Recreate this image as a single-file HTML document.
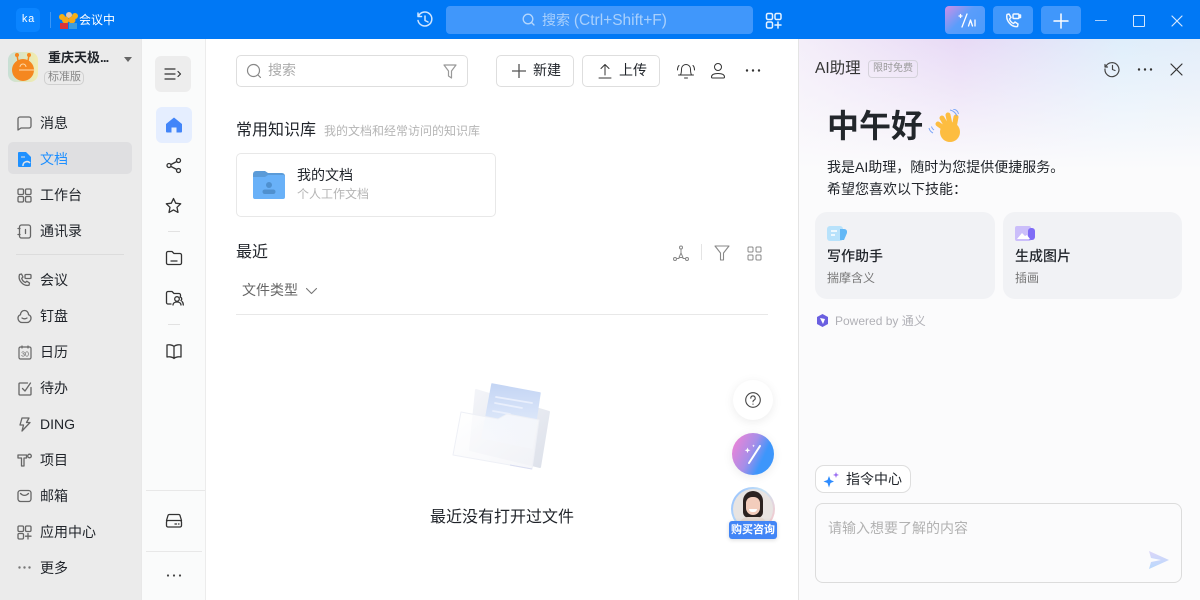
<!DOCTYPE html>
<html lang="zh-CN"><head><meta charset="utf-8"><title>钉钉文档</title>
<style>
*{box-sizing:border-box}
html,body{margin:0;padding:0;width:1200px;height:600px;overflow:hidden;background:#fff}
body{font-family:"Liberation Sans","Noto Sans CJK SC",sans-serif;color:#1f2329;position:relative}
.a,.t,svg.i{position:absolute}
.t{white-space:nowrap;line-height:20px}
svg.i{fill:none;stroke:#666;stroke-width:1.3;stroke-linecap:round;stroke-linejoin:round}
.nav{left:40px;font-size:14px;color:#1f2329}
.b{position:absolute;border:1px solid #dedede;border-radius:5px;background:#fff}
</style></head><body>
<!-- title bar -->
<div class="a" style="left:0;top:0;width:1200px;height:39px;background:#0078f5"></div>
<div class="a" style="left:16px;top:8px;width:24px;height:24px;background:#0a84ff;border-radius:5px"></div>
<div class="t" style="left:16px;top:10px;width:24px;text-align:center;color:#fff;font:11px/20px 'Liberation Mono',monospace">ka</div>
<div class="a" style="left:50px;top:12px;width:1px;height:16px;background:#3a97f8"></div>
<svg class="a" style="left:59px;top:11px" width="19" height="18" viewBox="0 0 19 18"><circle cx="10" cy="4" r="3" fill="#e0c5b0"/><circle cx="3" cy="6" r="3" fill="#f5b014"/><circle cx="16" cy="5" r="3" fill="#f5b014"/><circle cx="6.500" cy="9" r="3.500" fill="#f7a818"/><circle cx="13" cy="9" r="3.500" fill="#f7a818"/><rect x="1" y="12" width="8" height="6" fill="#d8323c"/><rect x="10" y="12" width="8" height="6" fill="#3c9ce0"/></svg>
<div class="t" style="left:79px;top:10px;font-size:12px;color:#fff">会议中</div>
<svg class="i" style="left:415px;top:10px;stroke:#cfe5ff;stroke-width:1.500" width="20" height="20" viewBox="0 0 20 20"><path d="M3.500 6A7 7 0 1 1 3 10.500M3 3v3.500h3.500M10 6v4.500l3 1.500"/></svg>
<div class="a" style="left:446px;top:6px;width:307px;height:28px;background:#4097fb;border-radius:4px"></div>
<svg class="i" style="left:521px;top:12px;stroke:#b5d7fd" width="15" height="15" viewBox="0 0 15 15"><circle cx="7" cy="7" r="4.800"/><path d="M10.500 10.500l2.500 2.500"/></svg>
<div class="t" style="left:542px;top:10px;font-size:14px;color:#a9d0fc">搜索 <span style="font-size:15.5px">(Ctrl+Shift+F)</span></div>
<svg class="i" style="left:765px;top:12px;stroke:#e6f2ff;stroke-width:1.500" width="18" height="18" viewBox="0 0 18 18"><rect x="1.500" y="1.500" width="6" height="6" rx="1.500"/><rect x="10" y="1.500" width="6" height="6" rx="1.500"/><rect x="1.500" y="10" width="6" height="6" rx="1.500"/><path d="M13 10v6M10 13h6"/></svg>
<div class="a" style="left:945px;top:6px;width:40px;height:28px;border-radius:4px;background:linear-gradient(135deg,#cf8fe6 0,#5a9dfb 45%,#4c9bfb 100%)"></div>
<svg class="i" style="left:957px;top:12px;stroke:#fff;stroke-width:1.300" width="20" height="18" viewBox="0 0 20 18"><path d="M10 2L5 15M2 4h3M3.500 2.500v3M11.500 14l2-6 2 6M18 8v6"/></svg>
<div class="a" style="left:993px;top:6px;width:40px;height:28px;border-radius:4px;background:#4097fb"></div>
<svg class="i" style="left:1004px;top:12px;stroke:#f0f7ff;stroke-width:1.500" width="18" height="18" viewBox="0 0 18 18"><path d="M3 2.500l2-.5 2 3.500-1.500 1.500c.5 2 2 3.500 4 4.500l1.500-1.500 3 2-.5 2.500c-6 1-12-6-10.500-12z"/><rect x="9" y="2" width="6" height="4.500" rx="1"/><path d="M15 3.500l1.500-.5v2.500L15 5"/></svg>
<div class="a" style="left:1041px;top:6px;width:40px;height:28px;border-radius:4px;background:#4097fb"></div>
<svg class="i" style="left:1053px;top:13px;stroke:#fff;stroke-width:1.500" width="16" height="16" viewBox="0 0 16 16"><path d="M8 1v14M1 8h14"/></svg>
<div class="a" style="left:1095px;top:20px;width:12px;height:1px;background:#a9d0fc"></div>
<div class="a" style="left:1133px;top:15px;width:12px;height:12px;border:1.300px solid #d5e8fe;border-radius:1px"></div>
<svg class="i" style="left:1171px;top:15px;stroke:#d5e8fe;stroke-width:1.200" width="12" height="12" viewBox="0 0 12 12"><path d="M1 1l10 10M11 1L1 11"/></svg>

<!-- left sidebar -->
<div class="a" style="left:0;top:39px;width:141px;height:561px;background:#ebebeb"></div>
<div class="a" style="left:8px;top:52px;width:30px;height:30px;border-radius:8px;background:linear-gradient(90deg,#c8dfd6,#f3ecae)"></div>
<svg class="a" style="left:8px;top:52px" width="30" height="30" viewBox="0 0 30 30"><circle cx="15" cy="18" r="11" fill="#f5871f"/><path d="M10 9L9 3M20 9l1-6" stroke="#f5871f" stroke-width="1.500"/><circle cx="9" cy="3" r="2" fill="#f5871f"/><circle cx="21" cy="3" r="2" fill="#f5871f"/><path d="M11 18h16M12 15a3 3 0 0 1 6 0" stroke="#ffd9a8" stroke-width="1" fill="none"/></svg>
<div class="t" style="left:48px;top:48px;font-size:13px;font-weight:700;color:#1f2329">重庆天极<span style="letter-spacing:-.8px">...</span></div>
<div class="a" style="left:124px;top:57px;border-left:4px solid transparent;border-right:4px solid transparent;border-top:5px solid #666"></div>
<div class="a" style="left:44px;top:71px;width:40px;height:14px;border:1px solid #d0d0d0;border-radius:5px"></div>
<div class="t" style="left:48px;top:67px;font-size:11px;color:#888">标准版</div>
<div class="a" style="left:8px;top:142px;width:124px;height:32px;border-radius:5px;background:#dfdfe1"></div>
<div class="a" style="left:16px;top:254px;width:108px;height:1px;background:#dcdcdc"></div>

<svg class="i" style="left:17px;top:116px" width="15" height="15" viewBox="0 0 15 15"><path d="M3 1h9a2 2 0 0 1 2 2v7a2 2 0 0 1-2 2H4l-3 2V3a2 2 0 0 1 2-2z"/></svg>
<div class="t nav" style="top:113px">消息</div>
<svg class="a" style="left:18px;top:152px" width="13" height="15" viewBox="0 0 13 15"><path d="M1 0h7l5 5v9a1 1 0 0 1-1 1H1a1 1 0 0 1-1-1V1a1 1 0 0 1 1-1z" fill="#1e90ff"/><path d="M5 14a4 4 0 0 1 7-3" stroke="#e4e4e6" stroke-width="1.500" fill="none"/><path d="M3 5h4" stroke="#e4e4e6"/></svg>
<div class="t nav" style="top:149px;color:#1e8fff">文档</div>
<svg class="i" style="left:17px;top:188px" width="15" height="15" viewBox="0 0 15 15"><rect x="1" y="1" width="5.500" height="5.500" rx="1.200"/><rect x="8.500" y="1" width="5.500" height="5.500" rx="1.200"/><rect x="1" y="8.500" width="5.500" height="5.500" rx="1.200"/><rect x="8.500" y="8.500" width="5.500" height="5.500" rx="1.200"/></svg>
<div class="t nav" style="top:185px">工作台</div>
<svg class="i" style="left:17px;top:224px" width="15" height="15" viewBox="0 0 15 15"><rect x="2.500" y="1" width="11" height="13" rx="2"/><path d="M1 4.500h2M1 10.500h2M8.500 5.500v4"/></svg>
<div class="t nav" style="top:221px">通讯录</div>
<svg class="i" style="left:17px;top:273px" width="15" height="15" viewBox="0 0 15 15"><path d="M2.500 1.500l2-.5 1.500 3-1.300 1.300c.5 2 1.900 3.400 3.800 4.200l1.300-1.300 2.700 1.800-.5 2.200C6.500 13.500.5 7.500 2.500 1.500z"/><rect x="8" y="1.500" width="6" height="4" rx="1"/></svg>
<div class="t nav" style="top:270px">会议</div>
<svg class="i" style="left:17px;top:309px" width="15" height="15" viewBox="0 0 15 15"><path d="M7.500 1.500c2.500 0 4 2 4 4.200 1.700.5 2.500 2 2.500 3.500 0 2.200-1.700 4.300-4 4.300H5c-2.300 0-4-2.100-4-4.300 0-1.500.8-3 2.500-3.500 0-2.200 1.500-4.200 4-4.200z"/><path d="M5 9c1.500 1 3.500 1 5 0"/></svg>
<div class="t nav" style="top:306px">钉盘</div>
<svg class="i" style="left:18px;top:345px;stroke-width:1.200" width="14" height="15" viewBox="0 0 14 15"><rect x="1" y="2" width="12" height="12" rx="1.500"/><path d="M4 1v2M10 1v2"/><text x="7" y="11.500" font-size="7" text-anchor="middle" fill="#666" stroke="none" font-family="Liberation Sans">30</text></svg>
<div class="t nav" style="top:342px">日历</div>
<svg class="i" style="left:18px;top:381px" width="14" height="15" viewBox="0 0 14 15"><path d="M13 6.500V13a1 1 0 0 1-1 1H2a1 1 0 0 1-1-1V3a1 1 0 0 1 1-1h7.500M4.500 7.500l2.500 2.500 5.500-8"/></svg>
<div class="t nav" style="top:378px">待办</div>
<svg class="i" style="left:18px;top:417px" width="13" height="15" viewBox="0 0 13 15"><path d="M4 1h7L8.500 5.500H12L4 14l1.500-6H2z"/></svg>
<div class="t nav" style="top:414px">DING</div>
<svg class="i" style="left:17px;top:453px" width="15" height="15" viewBox="0 0 15 15"><path d="M1 2h8.500v3H7v8H4.500V5H1z"/><circle cx="12.500" cy="3" r="1.800"/></svg>
<div class="t nav" style="top:450px">项目</div>
<svg class="i" style="left:17px;top:489px" width="15" height="14" viewBox="0 0 15 14"><rect x="1" y="1.500" width="13" height="11" rx="2.500"/><path d="M3.500 4.500c2.500 2.500 5.500 2.500 8 0"/></svg>
<div class="t nav" style="top:486px">邮箱</div>
<svg class="i" style="left:17px;top:525px" width="15" height="15" viewBox="0 0 15 15"><rect x="1" y="1" width="5.500" height="5.500" rx="1.200"/><rect x="8.500" y="1" width="5.500" height="5.500" rx="1.200"/><rect x="1" y="8.500" width="5.500" height="5.500" rx="1.200"/><path d="M11 8.500v5.500M8.500 11.200H14"/></svg>
<div class="t nav" style="top:522px">应用中心</div>
<svg class="a" style="left:18px;top:566px" width="13" height="3" viewBox="0 0 13 3"><circle cx="1.500" cy="1.500" r="1.200" fill="#777"/><circle cx="6.500" cy="1.500" r="1.200" fill="#777"/><circle cx="11.500" cy="1.500" r="1.200" fill="#777"/></svg>
<div class="t nav" style="top:558px">更多</div>

<!-- second column -->
<div class="a" style="left:141px;top:39px;width:65px;height:561px;background:#fafbfb;border-left:1px solid #e8e8e8;border-right:1px solid #ececec"></div>
<div class="a" style="left:155px;top:56px;width:36px;height:36px;background:#ededed;border-radius:6px"></div>
<svg class="i" style="left:164px;top:67px;stroke:#333;stroke-width:1.200" width="18" height="14" viewBox="0 0 18 14"><path d="M1 2h10M1 7h10M1 12h10M14 4.500l2.500 2.500-2.500 2.500"/></svg>
<div class="a" style="left:156px;top:107px;width:36px;height:36px;background:#e5eeff;border-radius:6px"></div>
<svg class="a" style="left:165px;top:116px" width="18" height="18" viewBox="0 0 18 18"><path d="M9 1.500L17 8v7.500a1 1 0 0 1-1 1h-4.500v-5h-5v5H2a1 1 0 0 1-1-1V8z" fill="#4285f9"/></svg>
<svg class="i" style="left:166px;top:157px;stroke:#333;stroke-width:1.300" width="16" height="17" viewBox="0 0 16 17"><circle cx="12.500" cy="3.500" r="2"/><circle cx="3" cy="8.500" r="2"/><circle cx="12.500" cy="13.500" r="2"/><path d="M5 7.500l5.800-3M5 9.500l5.800 3"/></svg>
<svg class="i" style="left:165px;top:197px;stroke:#333;stroke-width:1.300" width="17" height="17" viewBox="0 0 17 17"><path d="M8.500 1.500l2.200 4.700 5 .6-3.700 3.500 1 5.100-4.500-2.500-4.500 2.500 1-5.100L1.300 6.800l5-.6z"/></svg>
<div class="a" style="left:168px;top:231px;width:12px;height:1px;background:#e2e2e2"></div>
<svg class="i" style="left:165px;top:250px;stroke:#333;stroke-width:1.300" width="18" height="16" viewBox="0 0 18 16"><path d="M1.500 3a1.500 1.500 0 0 1 1.500-1.500h4l2 2h6a1.500 1.500 0 0 1 1.500 1.500v8a1.500 1.500 0 0 1-1.500 1.500H3A1.500 1.500 0 0 1 1.500 13zM6 11h6"/></svg>
<svg class="i" style="left:165px;top:290px;stroke:#333;stroke-width:1.300" width="19" height="16" viewBox="0 0 19 16"><path d="M6 14H3a1.500 1.500 0 0 1-1.500-1.500V3A1.500 1.500 0 0 1 3 1.500h4l2 2h5a1.500 1.500 0 0 1 1.500 1.500v1"/><circle cx="12" cy="9" r="2.300"/><path d="M8 15c0-4 8-4 8 0M15 7a2 2 0 0 1 1 3.500M17 11.500c1 .8 1.300 2 1.300 3.500"/></svg>
<div class="a" style="left:168px;top:324px;width:12px;height:1px;background:#e2e2e2"></div>
<svg class="i" style="left:166px;top:343px;stroke:#333;stroke-width:1.300" width="16" height="17" viewBox="0 0 16 17"><path d="M8 3.500C6.500 1.800 3 1.500 1 2v12c2-.5 5.500-.2 7 1.500 1.500-1.700 5-2 7-1.500V2c-2-.5-5.500-.2-7 1.500zM8 3.500v12"/></svg>
<div class="a" style="left:146px;top:490px;width:59px;height:1px;background:#e8e8e8"></div>
<svg class="i" style="left:165px;top:513px;stroke:#333;stroke-width:1.300" width="18" height="16" viewBox="0 0 18 16"><path d="M1.500 7.500L3 2.500a1.500 1.500 0 0 1 1.500-1h9a1.500 1.500 0 0 1 1.500 1l1.500 5"/><rect x="1.500" y="7.500" width="15" height="6.500" rx="1.500"/><path d="M10 11h1.500M13.500 11h.5"/></svg>
<div class="a" style="left:146px;top:551px;width:56px;height:1px;background:#e8e8e8"></div>
<svg class="a" style="left:166px;top:574px" width="16" height="3" viewBox="0 0 16 3"><circle cx="2" cy="1.500" r="1.100" fill="#444"/><circle cx="8" cy="1.500" r="1.100" fill="#444"/><circle cx="14" cy="1.500" r="1.100" fill="#444"/></svg>

<!-- main -->
<div class="b" style="left:236px;top:55px;width:232px;height:32px"></div>
<svg class="i" style="left:246px;top:63px;stroke:#888;stroke-width:1.200" width="16" height="16" viewBox="0 0 16 16"><circle cx="7.500" cy="7.500" r="6"/><path d="M12 12l2.500 2.500"/></svg>
<div class="t" style="left:268px;top:60px;font-size:14px;color:#aaa">搜索</div>
<svg class="i" style="left:443px;top:64px;stroke:#999;stroke-width:1.200" width="14" height="15" viewBox="0 0 14 15"><path d="M1 1h12L8.500 7v7L5.500 12V7z"/></svg>
<div class="b" style="left:496px;top:55px;width:78px;height:32px"></div>
<svg class="i" style="left:512px;top:64px;stroke:#555;stroke-width:1.300" width="14" height="14" viewBox="0 0 14 14"><path d="M7 0v14M0 7h14"/></svg>
<div class="t" style="left:533px;top:60px;font-size:14px">新建</div>
<div class="b" style="left:582px;top:55px;width:78px;height:32px"></div>
<svg class="i" style="left:598px;top:63px;stroke:#333;stroke-width:1" width="14" height="16" viewBox="0 0 14 16"><path d="M7 12V2M3 5.500L7 1.500l4 4M1 15h12"/></svg>
<div class="t" style="left:619px;top:60px;font-size:14px">上传</div>
<svg class="i" style="left:676px;top:61px;stroke:#333;stroke-width:1" width="20" height="19" viewBox="0 0 20 19"><path d="M4.500 14c1-2 1-4 1-6a4.500 4.500 0 0 1 9 0c0 2 0 4 1 6zM2.500 14h15M8.500 17h3M1.500 9c0-2 .5-3.500 1.500-4.500M18.500 9c0-2-.5-3.500-1.500-4.500"/></svg>
<svg class="i" style="left:710px;top:62px;stroke:#333;stroke-width:1" width="16" height="17" viewBox="0 0 16 17"><circle cx="8" cy="5" r="3.500"/><path d="M1.500 15c0-2.500 3-3.500 6.500-3.500s6.500 1 6.500 3.500c0 .5-.5 1-1 1h-11c-.5 0-1-.5-1-1z"/></svg>
<svg class="a" style="left:745px;top:69px" width="16" height="3" viewBox="0 0 16 3"><circle cx="2" cy="1.500" r="1.200" fill="#333"/><circle cx="8" cy="1.500" r="1.200" fill="#333"/><circle cx="14" cy="1.500" r="1.200" fill="#333"/></svg>

<div class="t" style="left:236px;top:121px;font-size:16px;color:#1f2329">常用知识库</div>
<div class="t" style="left:324px;top:121px;font-size:12px;color:#b5b5b5">我的文档和经常访问的知识库</div>
<div class="b" style="left:236px;top:153px;width:260px;height:64px;border-color:#e8e8e8"></div>
<svg class="a" style="left:253px;top:171px" width="32" height="28" viewBox="0 0 32 28"><path d="M0 3a3 3 0 0 1 3-3h9l3 2h14a3 3 0 0 1 3 3v6H0z" fill="#5b9bd8"/><path d="M0 6h12l3-2h15a2 2 0 0 1 2 2v20a2 2 0 0 1-2 2H2a2 2 0 0 1-2-2z" fill="#69b1f8"/><circle cx="16" cy="14" r="3" fill="#4f90cf"/><rect x="9.500" y="18.500" width="13" height="4.500" rx="2.200" fill="#4f90cf"/></svg>
<div class="t" style="left:297px;top:165px;font-size:14px;color:#1f2329">我的文档</div>
<div class="t" style="left:297px;top:184px;font-size:12px;color:#b5b5b5">个人工作文档</div>

<div class="t" style="left:236px;top:243px;font-size:16px;color:#1f2329">最近</div>
<svg class="i" style="left:672px;top:245px;stroke:#888;stroke-width:1" width="18" height="17" viewBox="0 0 18 17"><circle cx="9" cy="2.500" r="1.500"/><circle cx="3" cy="14" r="1.500"/><circle cx="15" cy="14" r="1.500"/><path d="M9 4v4M7 12.500L9 8l2 4.500zM4.500 13.500H7M11 13.500h2.500"/></svg>
<div class="a" style="left:701px;top:244px;width:1px;height:16px;background:#e4e4e4"></div>
<svg class="i" style="left:714px;top:245px;stroke:#888;stroke-width:1.100" width="16" height="16" viewBox="0 0 16 16"><path d="M1 1h14L9.500 8v7h-3V8z"/></svg>
<svg class="i" style="left:747px;top:246px;stroke:#888;stroke-width:1" width="15" height="15" viewBox="0 0 15 15"><rect x="1" y="1" width="5" height="5" rx="1"/><rect x="9" y="1" width="5" height="5" rx="1"/><rect x="1" y="9" width="5" height="5" rx="1"/><rect x="9" y="9" width="5" height="5" rx="1"/></svg>
<div class="t" style="left:242px;top:280px;font-size:14px;color:#666">文件类型</div>
<svg class="i" style="left:305px;top:287px;stroke:#777;stroke-width:1.100" width="13" height="8" viewBox="0 0 13 8"><path d="M1.500 1.500L6.500 6.500l5-5"/></svg>
<div class="a" style="left:236px;top:314px;width:532px;height:1px;background:#e8e8e8"></div>

<!-- empty illustration -->
<svg class="a" style="left:450px;top:380px" width="106" height="95" viewBox="0 0 106 95">
<defs><linearGradient id="bk" x1="0" y1="0" x2="1" y2="1"><stop offset="0" stop-color="#f4f5f9"/><stop offset="1" stop-color="#dde1ea"/></linearGradient><linearGradient id="pa" x1="0" y1="0" x2="0" y2="1"><stop offset="0" stop-color="#c4d5f4"/><stop offset=".55" stop-color="#dbe6f9"/><stop offset="1" stop-color="#eaf0fc"/></linearGradient><linearGradient id="fr" x1="0" y1="0" x2="1" y2="1"><stop offset="0" stop-color="#ffffff" stop-opacity=".75"/><stop offset="1" stop-color="#f3f4f8" stop-opacity=".88"/></linearGradient></defs>
<path d="M26 10L99 32 90 87 20 70z" fill="url(#bk)" stroke="url(#bk)" stroke-width="2" stroke-linejoin="round"/>
<path d="M42 4L90 13 82 68 32 58z" fill="url(#pa)" stroke="url(#pa)" stroke-width="1.500" stroke-linejoin="round"/>
<path d="M46 17L82 23M45 23L72 28M43 31L60 34" stroke="#e9effc" stroke-width="1.800" stroke-linecap="round" fill="none"/>
<path d="M11 32L48 39 57 34 89 40 82 89 3 75z" fill="url(#fr)" stroke="#eef0f6" stroke-linejoin="round"/>
<path d="M60 85L82 89" stroke="#d8dcf0" stroke-width="1"/>
</svg>
<div class="t" style="left:430px;top:508px;font-size:16px;color:#1f2329">最近没有打开过文件</div>

<!-- floating -->
<div class="a" style="left:733px;top:380px;width:40px;height:40px;border-radius:50%;background:#fff;box-shadow:0 2px 10px rgba(0,0,0,.08)"></div>
<svg class="i" style="left:745px;top:392px;stroke:#444;stroke-width:1.100" width="16" height="16" viewBox="0 0 16 16"><circle cx="8" cy="8" r="7.300"/><path d="M5.800 6.200A2.200 2.200 0 1 1 8.800 8.200C8.200 8.500 8 9 8 9.800M8 12v.3"/></svg>
<div class="a" style="left:732px;top:433px;width:42px;height:42px;border-radius:50%;background:linear-gradient(115deg,#e884d8 10%,#a68ee8 45%,#3d96fb 70%);box-shadow:0 2px 10px rgba(0,0,0,.08)"></div>
<svg class="a" style="left:744px;top:441px" width="22" height="26" viewBox="0 0 22 26"><path d="M16 5L5 22" stroke="#fff" stroke-width="2" stroke-linecap="round"/><path d="M3.500 6.500l.8 2 2 .8-2 .8-.8 2-.8-2-2-.8 2-.8zM9.500 3.500l.4 1 1 .4-1 .4-.4 1-.4-1-1-.4 1-.4z" fill="#fff"/></svg>
<div class="a" style="left:731px;top:487px;width:44px;height:44px;border-radius:50%;background:linear-gradient(120deg,#8fbcff,#c8e4f6 50%,#ffc3c3);padding:2px"><div style="width:40px;height:40px;border-radius:50%;background:#e8e4e2;overflow:hidden;position:relative">
<div class="a" style="left:10px;top:2px;width:20px;height:27px;background:#2b2220;border-radius:10px 10px 6px 6px"></div>
<div class="a" style="left:13px;top:8px;width:14px;height:18px;background:#f3cdbc;border-radius:7px 7px 8px 8px"></div>
<div class="a" style="left:16px;top:20px;width:8px;height:2.500px;background:#fff;border-radius:0 0 3px 3px"></div>
<div class="a" style="left:6px;top:28px;width:28px;height:14px;background:#e3d7cf;border-radius:9px 9px 0 0"></div></div></div>
<div class="a" style="left:729px;top:521px;width:48px;height:18px;background:#4285f6;border-radius:3px;box-shadow:0 1px 4px rgba(0,0,0,.15)"></div>
<div class="t" style="left:731px;top:520px;font-size:11px;font-weight:700;color:#fff">购买咨询</div>

<!-- AI panel -->
<div class="a" style="left:798px;top:39px;width:402px;height:561px;border-left:1px solid #e4e4e4;background:#fbfbfc;overflow:hidden">
<div class="a" style="left:0;top:0;width:402px;height:130px;background:linear-gradient(180deg,rgba(251,251,252,0) 0,#fbfbfc 100%),linear-gradient(90deg,#f4eef9 0,#e8daf6 40%,#dfeefb 80%,#e3edf9 100%)"></div>
</div>
<div class="t" style="left:815px;top:59px;font-size:15.5px;color:#333">AI助理</div>
<div class="a" style="left:868px;top:60px;width:50px;height:18px;border:1px solid #d5d2db;border-radius:4px"></div>
<div class="t" style="left:873px;top:59px;font-size:10px;color:#999">限时免费</div>
<svg class="i" style="left:1103px;top:60px;stroke:#444;stroke-width:1.200" width="18" height="18" viewBox="0 0 18 18"><path d="M3 6a7 7 0 1 1-1 3M2 4.500V7h2.500M9.500 5.500V9.500l2.500 1"/></svg>
<svg class="a" style="left:1137px;top:68px" width="16" height="3" viewBox="0 0 16 3"><circle cx="2" cy="1.500" r="1.200" fill="#333"/><circle cx="8" cy="1.500" r="1.200" fill="#333"/><circle cx="14" cy="1.500" r="1.200" fill="#333"/></svg>
<svg class="i" style="left:1170px;top:63px;stroke:#333;stroke-width:1.200" width="13" height="13" viewBox="0 0 13 13"><path d="M1 1l11 11M12 1L1 12"/></svg>
<div class="t" style="left:827px;top:106px;font-size:32px;line-height:40px;font-weight:700;color:#22262b">中午好</div>
<svg class="a" style="left:928px;top:109px" width="35" height="34" viewBox="0 0 35 34"><g stroke="#fdbd40" stroke-width="5" stroke-linecap="round"><path d="M20 22L10 15M21 21L14 9M23 20L20 6M26 19L28 8"/></g><circle cx="22" cy="23" r="10" fill="#fdbd40"/><path d="M22 1c3 .5 6 3 7 6M25 0c3 .5 5 2.500 5.500 5M1 19c.5 2 2 4 4 5M3.500 17.500c.3 1.500 1 2.500 2.500 3.500" stroke="#7ea8f8" fill="none"/></svg>
<div class="t" style="left:827px;top:157px;font-size:14px;color:#1f2329">我是AI助理，随时为您提供便捷服务。</div>
<div class="t" style="left:827px;top:179px;font-size:14px;color:#1f2329">希望您喜欢以下技能：</div>
<div class="a" style="left:815px;top:212px;width:180px;height:87px;border-radius:12px;background:#f1f2f5"></div>
<div class="a" style="left:1003px;top:212px;width:179px;height:87px;border-radius:12px;background:#f1f2f5"></div>
<svg class="a" style="left:827px;top:225px" width="20" height="17" viewBox="0 0 20 17"><rect x="0" y="1" width="16" height="15" rx="3" fill="#b8e2fb"/><path d="M13 4h4a3 3 0 0 1 3 4l-3 7h-4z" fill="#63b8f6"/><path d="M4 6h6M4 10h4" stroke="#fff" stroke-width="1.500"/></svg>
<div class="t" style="left:827px;top:246px;font-size:14px;color:#1f2329;font-weight:500">写作助手</div>
<div class="t" style="left:827px;top:268px;font-size:12px;color:#777">揣摩含义</div>
<svg class="a" style="left:1015px;top:225px" width="20" height="17" viewBox="0 0 20 17"><rect x="0" y="1" width="16" height="15" rx="2" fill="#cbbefa"/><rect x="13" y="3" width="7" height="12" rx="3" fill="#7f6cf6"/><path d="M2 14l5-6 3 3 2-1 3 4z" fill="#fff"/></svg>
<div class="t" style="left:1015px;top:246px;font-size:14px;color:#1f2329;font-weight:500">生成图片</div>
<div class="t" style="left:1015px;top:268px;font-size:12px;color:#777">插画</div>
<svg class="a" style="left:816px;top:314px" width="13" height="13" viewBox="0 0 13 13"><path d="M6.500 0L12 3v7l-5.500 3L1 10V3z" fill="#6a5fe0"/><path d="M4 4l5 1-2 5z" fill="#fff"/></svg>
<div class="t" style="left:835px;top:311px;font-size:12px;color:#b0b0b6">Powered by 通义</div>
<div class="a" style="left:815px;top:465px;width:96px;height:28px;background:#fff;border:1px solid #dedede;border-radius:9px"></div>
<svg class="a" style="left:823px;top:471px" width="17" height="17" viewBox="0 0 17 17"><path d="M6 5l1.500 4L11 10.500 7.500 12 6 16.500 4.500 12 .5 10.500 4.500 9z" fill="#2e8cff"/><path d="M13 1l.8 2L16 4l-2.200.8L13 7l-.8-2.200L10 4l2.200-1z" fill="#9b6ff2"/></svg>
<div class="t" style="left:846px;top:469px;font-size:14px;color:#1f2329">指令中心</div>
<div class="a" style="left:815px;top:503px;width:367px;height:80px;background:#fbfbfc;border:1px solid #dcdcdc;border-radius:8px"></div>
<div class="t" style="left:828px;top:518px;font-size:14px;color:#b2b2b2">请输入想要了解的内容</div>
<svg class="a" style="left:1148px;top:550px" width="22" height="20" viewBox="0 0 22 20"><defs><linearGradient id="sd" x1="0" y1="0" x2="0" y2="1"><stop offset="0" stop-color="#dcd6f8"/><stop offset="1" stop-color="#b8d8fd"/></linearGradient></defs><path d="M1 1l20 9-20 9 2-7 10-2-10-2z" fill="url(#sd)"/></svg>
</body></html>
